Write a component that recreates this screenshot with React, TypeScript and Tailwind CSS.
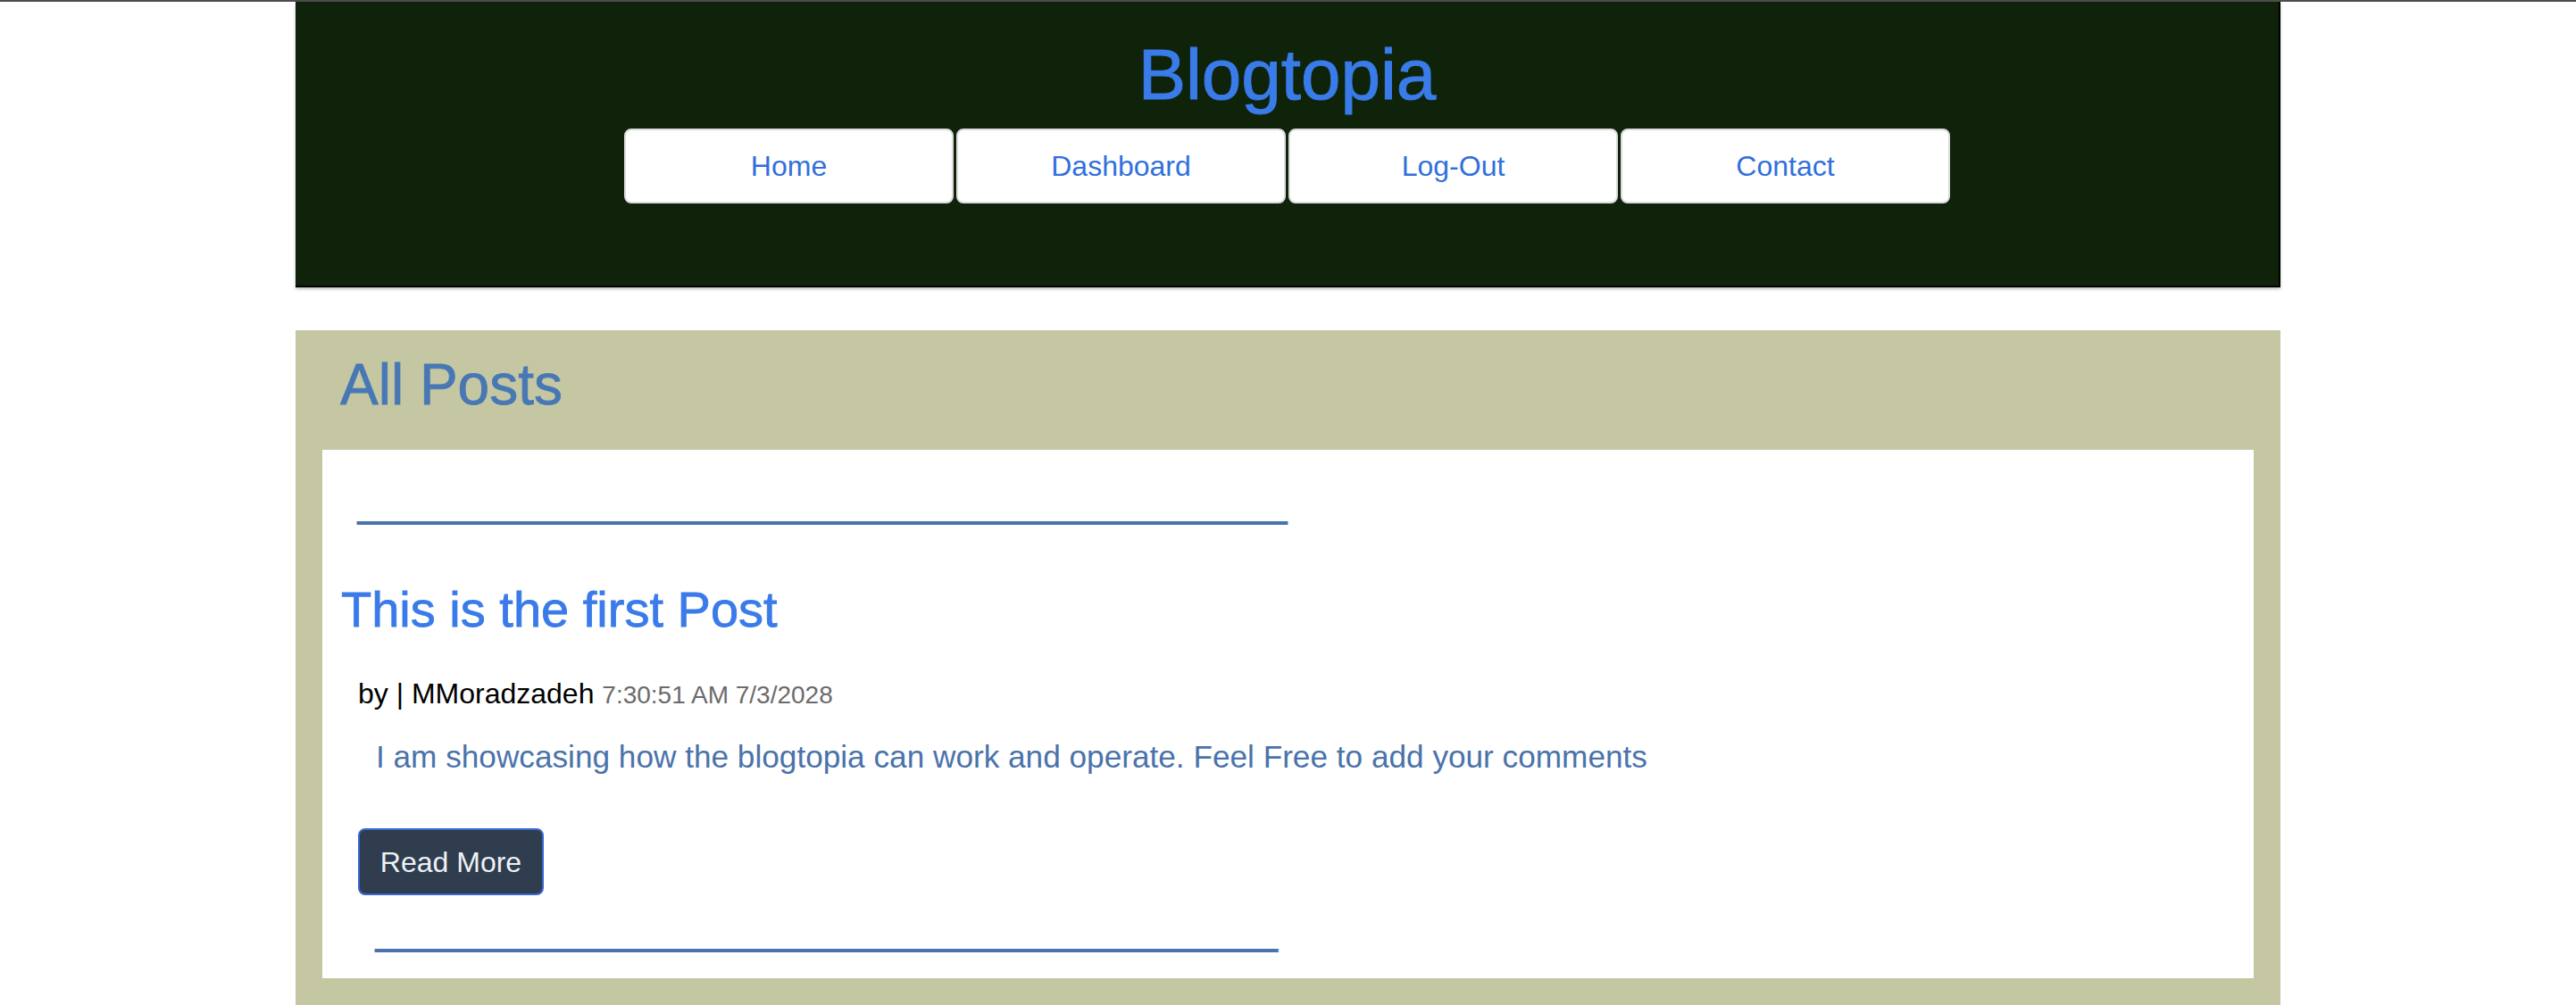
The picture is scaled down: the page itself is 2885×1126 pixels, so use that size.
import React from "react";

const navItems = ["Home", "Dashboard", "Log-Out", "Contact"];

const rule = "_".repeat(55);

const PostCard: React.FC = () => {
  return (
    <div className="mx-[30px] bg-white pb-[32px] pt-[47px]">
      <div className="ml-[40px] whitespace-nowrap text-[34px] leading-[34px] text-[#4a74ae] [-webkit-text-stroke:2px_#4a74ae]">
        {rule}
      </div>
      <h2 className="ml-[21px] mt-[70px] text-[56px] leading-[56px] text-[#3a7be9] [-webkit-text-stroke:0.8px_#3a7be9]">
        This is the first Post
      </h2>
      <p className="ml-[40px] mt-[50px] text-[32px] leading-[32px] text-black">
        by | MMoradzadeh{" "}
        <span className="text-[28px] text-[#6b6b6b]">7:30:51 AM 7/3/2028</span>
      </p>
      <p className="ml-[60px] mt-[35px] text-[35.2px] leading-[36px] text-[#4a73ab]">
        I am showcasing how the blogtopia can work and operate. Feel Free to add
        your comments
      </p>
      <button className="ml-[40px] mt-[62px] flex h-[75px] w-[208px] items-center justify-center rounded-[8px] border-2 border-[#3768cf] bg-[#2f3d4e] text-[32px] text-[#eef2f5]">
        Read More
      </button>
      <div className="ml-[60px] mt-[28px] whitespace-nowrap text-[33px] leading-[33px] text-[#4a74ae] [-webkit-text-stroke:2px_#4a74ae]">
        {rule}
      </div>
    </div>
  );
};

export default function App() {
  return (
    <div className="min-h-[1126px] bg-white font-['Liberation_Sans',Arial,sans-serif]">
      <div className="h-[2px] bg-[#4d4d4d]"></div>
      <div className="mx-auto w-[2223px]">
        <header className="flex flex-col items-center border-b-2 border-r-2 border-black bg-[#0e230a] pb-[92px] pt-[42px] shadow-[0_2px_3px_rgba(0,0,0,0.25)]">
          <h1 className="text-[80px] leading-[80px] text-[#3a7bea] [-webkit-text-stroke:1px_#3a7bea]">
            Blogtopia
          </h1>
          <nav className="mt-[20px] flex gap-[3px]">
            {navItems.map((item) => (
              <a
                key={item}
                href="#"
                className="flex h-[84px] w-[369px] items-center justify-center rounded-[8px] border-2 border-[#dcdcdc] bg-white text-[32px] text-[#3170dc]"
              >
                {item}
              </a>
            ))}
          </nav>
        </header>

        <main className="mt-[48px] bg-[#c5c7a3] pb-[40px] pt-[29px]">
          <h1 className="mb-[41px] pl-[50px] text-[64px] leading-[64px] text-[#4878b4] [-webkit-text-stroke:0.8px_#4878b4]">
            All Posts
          </h1>
          <PostCard />
        </main>
      </div>
    </div>
  );
}
